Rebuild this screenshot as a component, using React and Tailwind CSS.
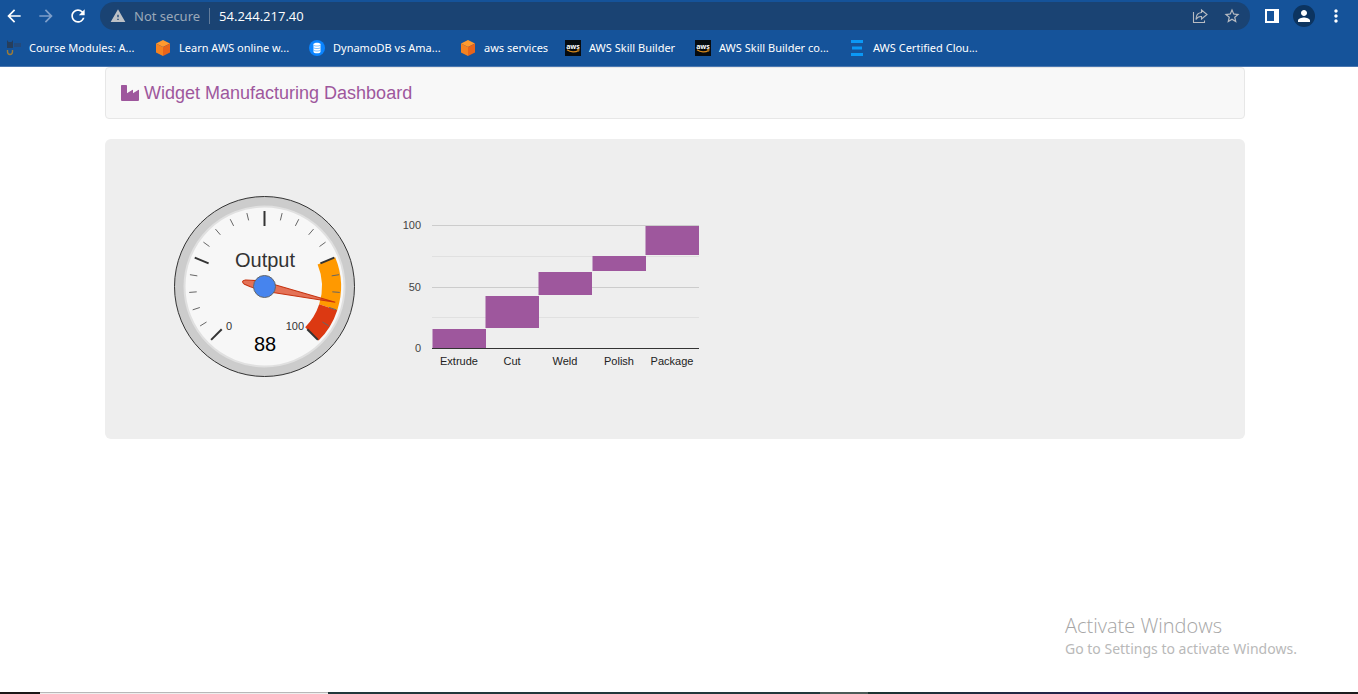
import React from "react";
import { MdArrowBack, MdArrowForward, MdRefresh, MdWarning, MdPerson, MdMoreVert, MdStarBorder } from "react-icons/md";

function CatIcon() {
  return (
    <svg viewBox="0 0 16 16" className="size-4 shrink-0" aria-hidden="true">
      <path d="M2 0l1.500 2h3L8 0v8H2z" fill="#263e5c" />
      <path d="M9 3h7v4H9z" fill="#234a7c" />
      <path d="M2.500 10v1.500c0 2 1 3 2.500 3s2.500-1 2.500-3V10" fill="none" stroke="#9c7c38" strokeWidth="1.400" />
    </svg>
  );
}

function CubeIcon() {
  return (
    <svg viewBox="0 0 16 16" className="size-4 shrink-0" aria-hidden="true">
      <path d="M8 0l7 3.500L8 7 1 3.500z" fill="#ff9a2e" />
      <path d="M1 3.500L8 7v9l-7-3.500z" fill="#f58220" />
      <path d="M15 3.500L8 7v9l7-3.500z" fill="#e8641b" />
    </svg>
  );
}

function DatabaseIcon() {
  return (
    <svg viewBox="0 0 16 16" className="size-4 shrink-0" aria-hidden="true">
      <circle cx="8" cy="8" r="8" fill="#0a84ff" />
      <path d="M4.500 4.200c0-2 7-2 7 0v7.600c0 2-7 2-7 0z" fill="#fff" />
      <path d="M4.500 5.300c1.500 1 5.500 1 7 0M4.500 7.800c1.500 1 5.500 1 7 0M4.500 10.300c1.500 1 5.500 1 7 0" fill="none" stroke="#5aaeff" strokeWidth=".8" />
    </svg>
  );
}

function AwsIcon() {
  return (
    <svg viewBox="0 0 16 16" className="size-4 shrink-0" aria-hidden="true">
      <path d="M0 0h16v16H0z" fill="#060b10" />
      <text x="8" y="8.500" textAnchor="middle" fill="#fff" fontSize="7" fontWeight="700" fontFamily="Open Sans, sans-serif">aws</text>
      <path d="M2 9.800c3.500 2.700 8.500 2.700 11.500.6" fill="none" stroke="#d98a1c" strokeWidth="1.200" />
      <path d="M12 9.600l2.200-.1-.6 2" fill="none" stroke="#d98a1c" strokeWidth=".8" />
    </svg>
  );
}

function BarsIcon() {
  return (
    <svg viewBox="0 0 16 16" className="size-4 shrink-0" aria-hidden="true">
      <path d="M2 0h12v3H2zM3 6.500h10v3H3zM2 13h12v3H2z" fill="#0b98f5" />
    </svg>
  );
}

const bookmarks = [
  { label: "Course Modules: A...", Icon: CatIcon, width: "w-[150px]" },
  { label: "Learn AWS online w...", Icon: CubeIcon, width: "w-[154px]" },
  { label: "DynamoDB vs Ama...", Icon: DatabaseIcon, width: "w-[151px]" },
  { label: "aws services", Icon: CubeIcon, width: "w-[105px]" },
  { label: "AWS Skill Builder", Icon: AwsIcon, width: "w-[130px]" },
  { label: "AWS Skill Builder co...", Icon: AwsIcon, width: "w-[154px]" },
  { label: "AWS Certified Clou...", Icon: BarsIcon, width: "w-[150px]" },
];

function BrowserBar() {
  return (
    <header className="border-b border-[#4a77b0] bg-[#15539a] font-['Open_Sans',sans-serif] text-white">
      <div className="flex h-8 items-center pr-3">
        <nav className="flex w-[100px] items-center gap-3 pl-1" aria-label="History">
          <button aria-label="Back"><MdArrowBack className="size-5" /></button>
          <button aria-label="Forward" className="text-[#7e9fca]"><MdArrowForward className="size-5" /></button>
          <button aria-label="Reload"><MdRefresh className="size-5" /></button>
        </nav>
        <div className="flex h-7 min-w-0 flex-1 items-center rounded-full bg-[#1a4373] pr-[9px] pl-2.5">
          <MdWarning className="size-4 shrink-0 text-[#bdc1c6]" />
          <label htmlFor="address" className="ml-2 shrink-0 font-['Noto_Sans',sans-serif] text-[13px] leading-4 text-[#9aa9b9]">Not secure</label>
          <span className="mx-[9px] h-4 w-px shrink-0 bg-[#627c9b]" />
          <input id="address" type="text" defaultValue="54.244.217.40" className="min-w-0 flex-1 bg-transparent text-[13px] leading-4 outline-none" />
          <button aria-label="Share this page" className="text-[#b8bcc2]">
            <svg viewBox="0 0 16 16" className="size-4" fill="none" stroke="currentColor" strokeWidth="1.100">
              <path d="M1.500 4v10.500h11V12.500M9.500 2l5.500 4.500L9.500 11V8.500C6.500 8.300 5 9.300 4 11.500 4 7.500 5.500 4.800 9.500 4.500z" />
            </svg>
          </button>
          <button aria-label="Bookmark this page" className="ml-[15px] text-[#b8bcc2]"><MdStarBorder className="size-[18px]" /></button>
        </div>
        <div className="ml-[15px] flex items-center">
          <button aria-label="Side panel" className="mr-3.5">
            <svg viewBox="0 0 14 14" className="size-3.5"><path d="M0 0h14v14H0zM2 2v10h7V2z" fill="currentColor" fillRule="evenodd" /></svg>
          </button>
          <button aria-label="Profile" className="mr-[11px] flex size-[22px] items-center justify-center rounded-full bg-[#0c3460]"><MdPerson className="size-[18px]" /></button>
          <button aria-label="Menu"><MdMoreVert className="size-5" /></button>
        </div>
      </div>
      <nav className="flex h-[34px] items-center overflow-hidden pb-0.5 pl-[5px]" aria-label="Bookmarks">
        {bookmarks.map(({ label, Icon, width }) => (
          <a key={label} href="#" className={`flex shrink-0 items-center gap-2 whitespace-nowrap font-['Noto_Sans',sans-serif] text-[11px] leading-4 ${width}`}>
            <Icon />
            <span>{label}</span>
          </a>
        ))}
      </nav>
    </header>
  );
}

function point(r, value) {
  const a = ((135 + value * 2.7) * Math.PI) / 180;
  return [90.5 + r * Math.cos(a), 90.5 + r * Math.sin(a)];
}

function band(from, to) {
  const [a, b, c, d] = [point(76.5, from), point(76.5, to), point(57.5, to), point(57.5, from)];
  return `M${a}A76.5 76.5 0 0 1 ${b}L${c}A57.5 57.5 0 0 0 ${d}Z`;
}

function Gauge() {
  const ticks = Array.from({ length: 21 }, (_, i) => i);
  return (
    <svg width="181" height="181" viewBox="0 0 181 181" className="shrink-0 font-['Liberation_Sans',Arial,sans-serif]" role="img" aria-label="Output gauge">
      <circle cx="90.500" cy="90.500" r="90" fill="#ccc" stroke="#333" />
      <circle cx="90.500" cy="90.500" r="80" fill="#f7f7f7" stroke="#e0e0e0" strokeWidth="2" />
      <path d={band(75, 90)} fill="#f90" />
      <path d={band(90, 100)} fill="#dc3912" />
      <text x="91" y="71" textAnchor="middle" fontSize="20" fill="#333">Output</text>
      {ticks.map((i) => {
        const major = i % 5 === 0;
        const [x1, y1] = point(75.5, i * 5);
        const [x2, y2] = point(major ? 60.5 : 68, i * 5);
        return <line key={i} x1={x1} y1={y1} x2={x2} y2={y2} stroke={major ? "#333" : "#666"} strokeWidth={major ? 2 : 1} />;
      })}
      <text x="52" y="134" fontSize="11" fill="#333">0</text>
      <text x="130" y="134" textAnchor="end" fontSize="11" fill="#333">100</text>
      <text x="91" y="155" textAnchor="middle" fontSize="20" fill="#000">88</text>
      <path d="M72.500 0L8 -4.200C0 -4.600 -14 -3.600 -20 -2.200Q-25 0 -20 2.200C-14 3.600 0 4.600 8 4.200Z" transform="translate(90.500 90.500) rotate(12.600)" fill="#dc3912" fillOpacity=".7" stroke="#c63310" />
      <circle cx="90.500" cy="90.500" r="11" fill="#4684ee" stroke="#666" />
    </svg>
  );
}

const stages = [
  { name: "Extrude", x: 33, y: 104, h: 19 },
  { name: "Cut", x: 86, y: 71, h: 32 },
  { name: "Weld", x: 139, y: 47, h: 23 },
  { name: "Polish", x: 193, y: 31, h: 15 },
  { name: "Package", x: 246, y: 1, h: 29 },
];

const gridLines = [
  { y: 0, color: "#ccc", label: "100" },
  { y: 31, color: "#e0e0e0" },
  { y: 62, color: "#ccc", label: "50" },
  { y: 92, color: "#e0e0e0" },
  { y: 123, color: "#333", label: "0" },
];

function StageChart() {
  return (
    <svg width="304" height="160" viewBox="0 -8 304 160" className="shrink-0 font-['Liberation_Sans',Arial,sans-serif]" role="img" aria-label="Widgets by stage">
      {gridLines.map((g) => (
        <g key={g.y}>
          <rect x="32" y={g.y} width="267" height="1" fill={g.color} />
          {g.label && <text x="21" y={g.y + 4} textAnchor="end" fontSize="11" fill="#444">{g.label}</text>}
        </g>
      ))}
      {stages.map((s) => (
        <g key={s.name}>
          <rect x={s.x - 0.5} y={s.y} width="53.500" height={s.h} fill="#9e579d" />
          <text x={s.x + 26} y="140" textAnchor="middle" fontSize="11" fill="#222">{s.name}</text>
        </g>
      ))}
    </svg>
  );
}

export default function App() {
  return (
    <div className="relative flex min-h-screen flex-col bg-white font-['Liberation_Sans',Arial,sans-serif]">
      <BrowserBar />
      <main className="flex-1 pr-2">
        <div className="mx-auto flex max-w-[1140px] flex-col gap-5">
          <nav className="flex h-[52px] items-center rounded border border-[#e7e7e7] bg-[#f8f8f8] px-[15px]">
            <a href="#" className="flex items-center gap-1 text-lg leading-5 text-[#9e579d]">
              <svg viewBox="0 0 19 16" width="19" height="16" aria-hidden="true">
                <path d="M0 .8q0-.8.8-.8h4.400q.8 0 .8.800v7.400L11.200 4.900q.8-.5.8.4v2.900L17.200 4.900q.8-.5.8.4V15q0 1-1 1H1q-1 0-1-1z" fill="currentColor" />
              </svg>
              <h1>Widget Manufacturing Dashboard</h1>
            </a>
          </nav>
          <section className="flex h-[300px] items-start gap-[45px] rounded-md bg-[#eee] pt-[57px] pl-[69px]">
            <Gauge />
            <div className="pt-[21px]">
              <StageChart />
            </div>
          </section>
        </div>
      </main>
      <aside className="absolute right-[57px] bottom-[35px] w-[236px] font-['Open_Sans',sans-serif] whitespace-nowrap text-[#b9b9b9]">
        <p className="text-xl leading-[26px] font-light text-[#a6a6a6]">Activate Windows</p>
        <p className="font-['Noto_Sans',sans-serif] text-sm leading-5">Go to Settings to activate Windows.</p>
      </aside>
      <footer className="flex h-0.5">
        <div className="w-10 bg-[#1b1718]" />
        <div className="w-72 border-t border-[#b8b8b8] bg-[#eee]" />
        <div className="w-[492px] bg-[#22383b]" />
        <div className="w-12 bg-[#4c5b58]" />
        <div className="flex-1 bg-linear-to-r from-[#1c3430] via-[#251f50] to-[#1c1c1c]" />
      </footer>
    </div>
  );
}
